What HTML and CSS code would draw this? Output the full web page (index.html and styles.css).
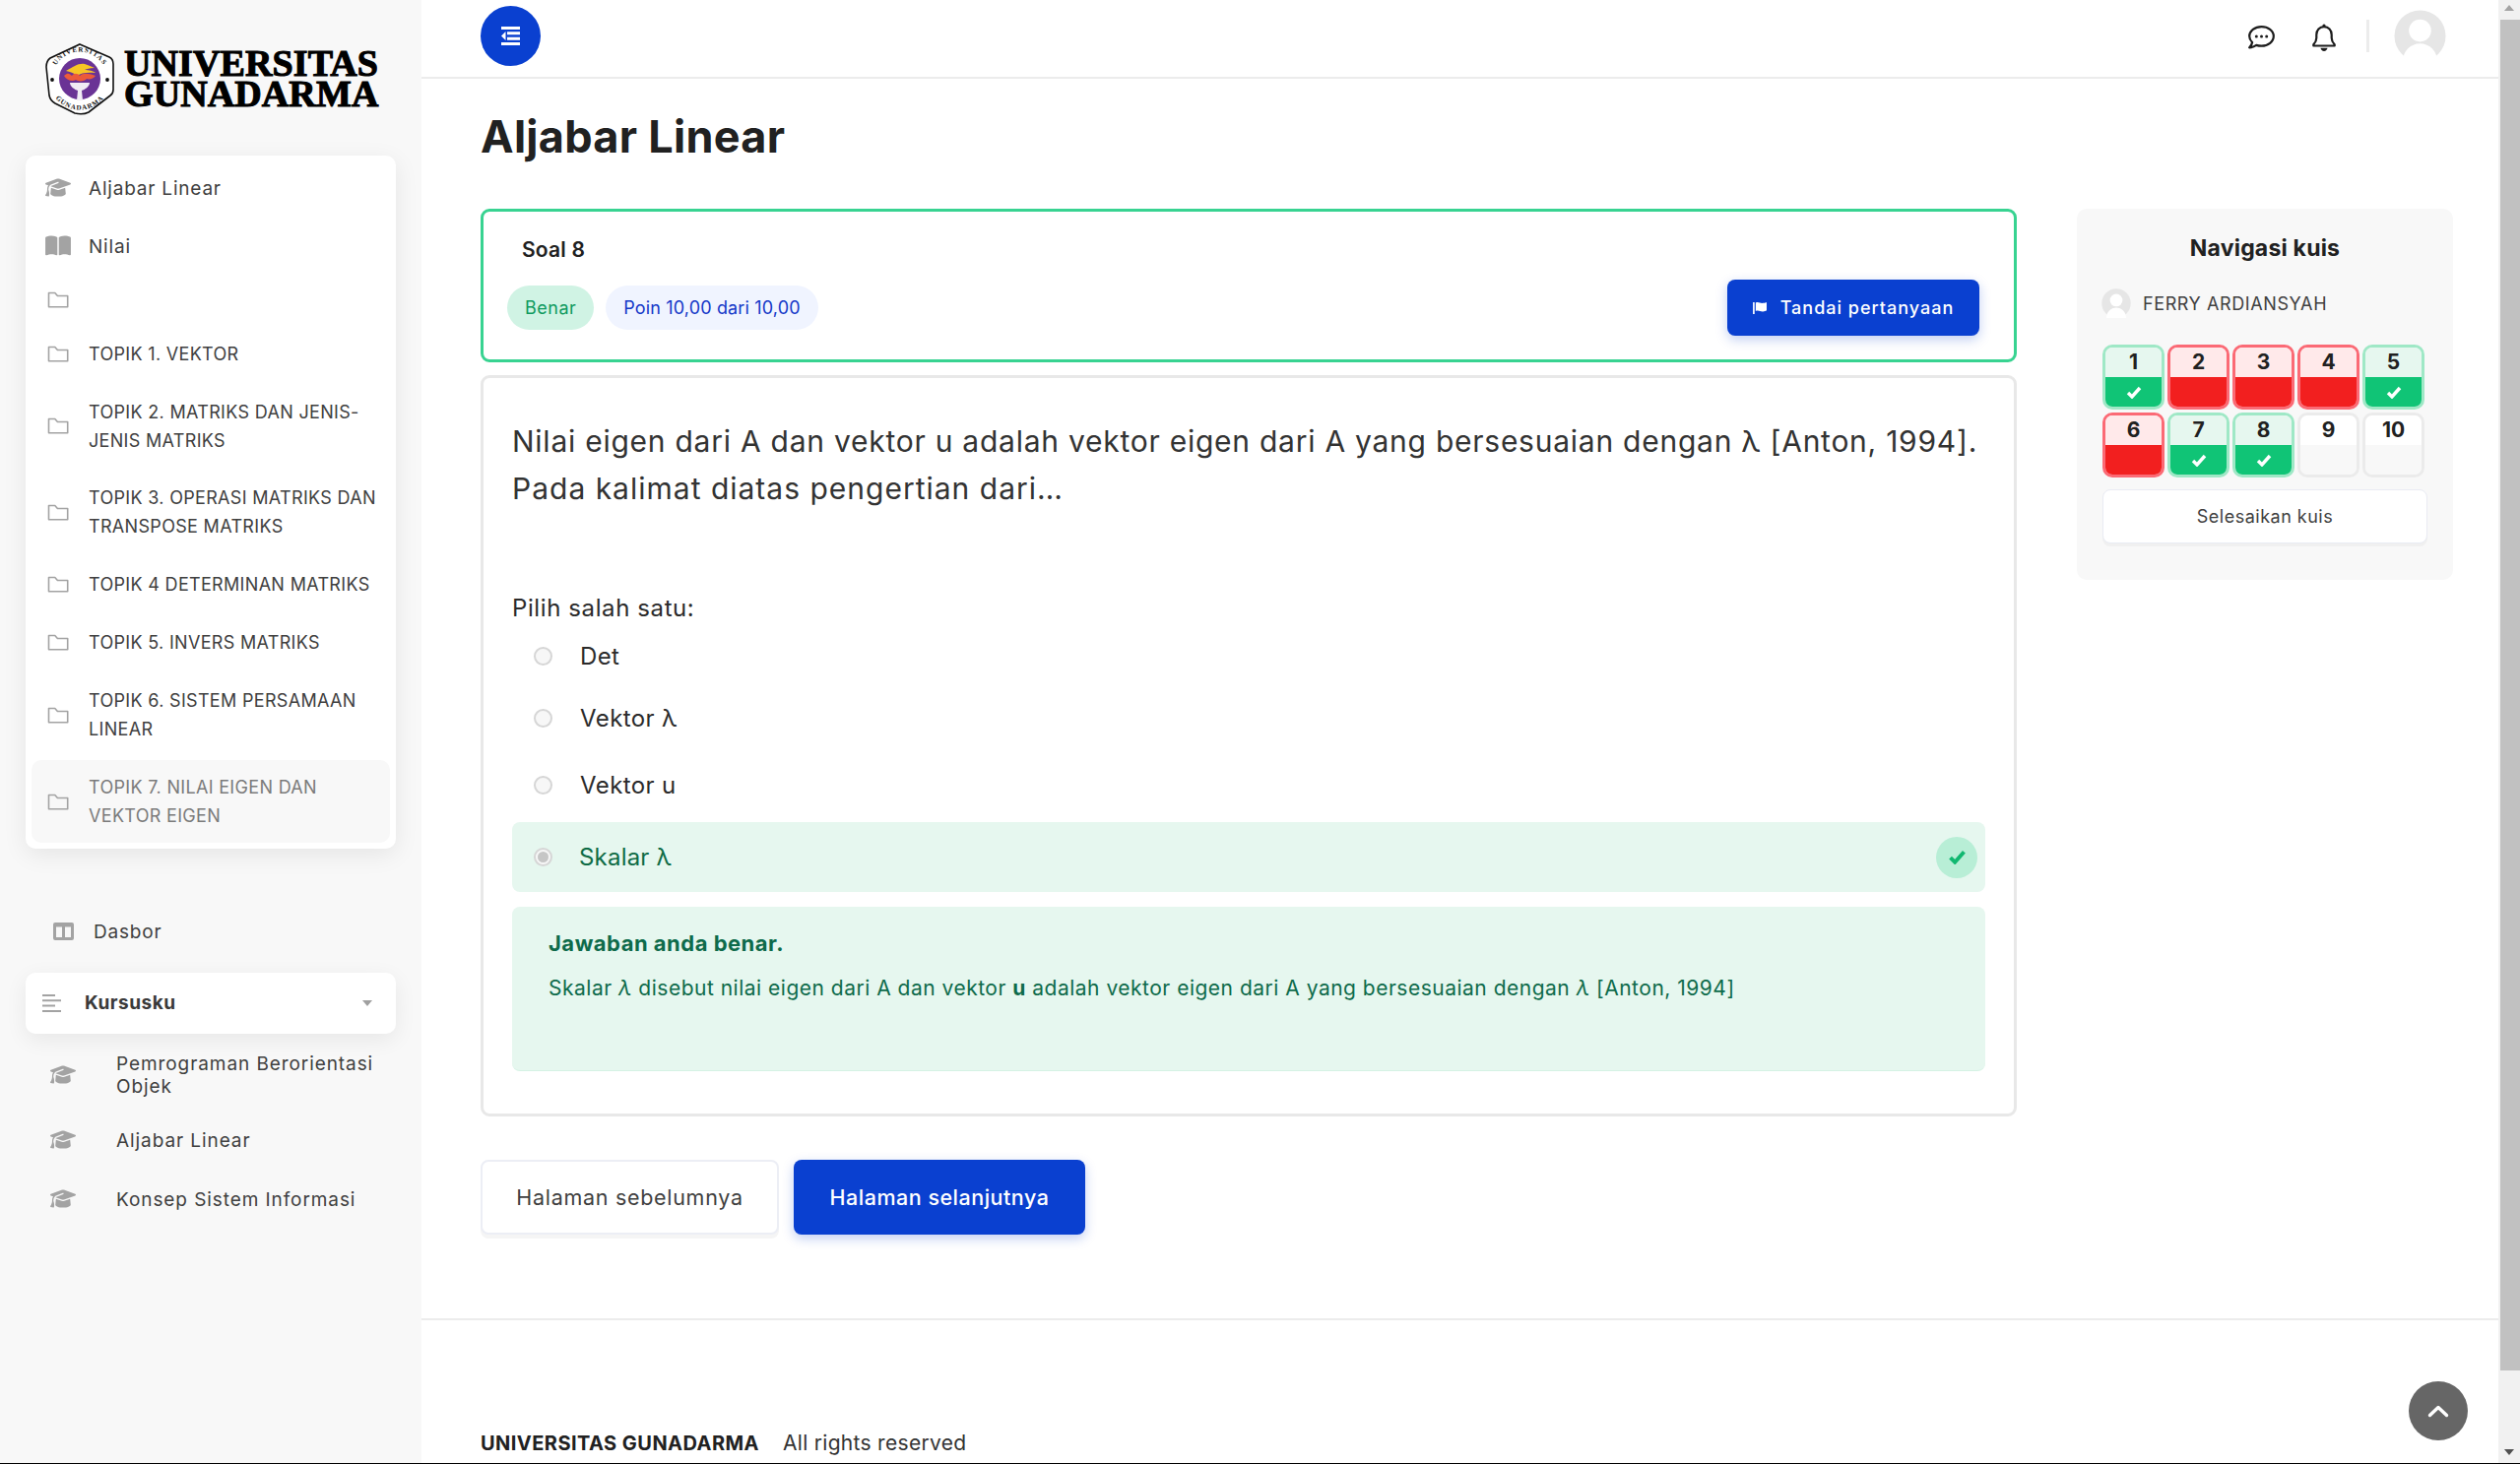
FILE: index.html
```html
<!DOCTYPE html>
<html lang="id">
<head>
<meta charset="utf-8">
<title>Aljabar Linear</title>
<link rel="stylesheet" href="styles.css">
</head>
<body>
<svg class="defs" width="0" height="0" aria-hidden="true">
  <symbol id="cap" viewBox="0 0 640 512"><path d="M320 32c-8.100 0-16.100 1.400-23.700 4.100L15.800 137.400C6.300 140.900 0 149.900 0 160s6.300 19.100 15.800 22.600l57.900 20.900C57.300 229.300 48 259.800 48 291.900v28.100c0 28.400-10.800 57.700-22.300 80.800c-6.500 13-13.900 25.800-22.500 37.600C0 442.700-.9 448.300 .9 453.400s6 8.900 11.200 10.200l64 16c4.200 1.100 8.700 .3 12.400-2s6.300-6.100 7.100-10.400c8.600-42.800 4.300-81.200-2.100-108.700C90.300 344.300 86 329.800 80 316.500V291.900c0-30.200 10.200-58.700 27.900-81.500c12.900-15.500 29.600-28 49.200-35.700l157-61.700c8.200-3.200 17.500 .8 20.700 9s-.8 17.500-9 20.700l-157 61.700c-12.400 4.900-23.300 12.400-32.200 21.600l159.600 57.600c7.600 2.700 15.600 4.100 23.700 4.100s16.100-1.400 23.700-4.100L624.200 182.600c9.500-3.400 15.800-12.500 15.800-22.600s-6.300-19.100-15.800-22.600L343.700 36.100C336.100 33.400 328.100 32 320 32zM128 408c0 35.300 86 72 192 72s192-36.700 192-72L496.700 262.600 354.500 314c-11.100 4-22.800 6-34.500 6s-23.500-2-34.500-6L143.300 262.600 128 408z"/></symbol>
  <symbol id="folder" viewBox="0 0 21 17"><path d="M1 15.800V1.500h6.300l2.600 3h10.300v11.300z" fill="none" stroke="currentColor" stroke-width="1.600" stroke-linejoin="round"/></symbol>
  <symbol id="tick" viewBox="0 0 16 13"><path d="M2 7l4 4 8-9" fill="none" stroke="currentColor" stroke-width="3.400"/></symbol>
  <symbol id="user" viewBox="0 0 54 54"><circle cx="27" cy="27" r="26.500" fill="#e6e6e6"/><circle cx="27" cy="21.500" r="11.500" fill="#fff"/><path d="M9 54c0-11 8-19 18-19s18 8 18 19z" fill="#fff"/></symbol>
</svg>

<div class="app">
  <aside class="sidebar">
    <div class="logo">
      <svg class="emblem" viewBox="0 0 70 73" aria-hidden="true">
        <path d="M35 1L65 14Q69 16 69 21L69 47Q69 51 66 53L44 70Q38 73 30 71L10 61Q5 58 4 53L1 24Q1 18 5 15z" fill="#fff" stroke="#111" stroke-width="1.600"/>
        <circle cx="35" cy="36" r="21" fill="#6a3395"/>
        <defs>
          <path id="arcTop" d="M7.500 36a27.500 27.500 0 0 1 55 0"/>
          <path id="arcBot" d="M3.500 36a31.500 31.500 0 0 0 63 0"/>
        </defs>
        <text class="arc"><textPath href="#arcTop" startOffset="50%" text-anchor="middle">UNIVERSITAS</textPath></text>
        <text class="arc"><textPath href="#arcBot" startOffset="50%" text-anchor="middle">GUNADARMA</textPath></text>
        <circle cx="7" cy="37" r="1.900" fill="#111"/><circle cx="63" cy="37" r="1.900" fill="#111"/>
        <path d="M21 28c8-4 12-8 19-7c4 1 7 3 10 4c-5 0-8 1-10 2c4 0 9 1 11 3c-8-1-15 0-19 3c-3-3-7-4-11-5z" fill="#f7c525"/>
        <path d="M19 33c4-4 6-2 8 0c2-3 6-3 8 0c3-3 8-3 16 0c-2 3-6 4-9 3c-2 3-9 3-11 1c-3 2-9 1-12-4z" fill="#ec5a3a"/>
        <path d="M25 40h20c0 4-5 7-8 8l1 10h-6l1-10c-3-1-8-4-8-8z" fill="#f1ecf4"/>
      </svg>
      <div class="logo-text"><span>UNIVERSITAS</span><span>GUNADARMA</span></div>
    </div>

    <nav class="card-menu">
      <a class="mi mi-mixed"><svg class="ic-cap"><use href="#cap"/></svg><span>Aljabar Linear</span></a>
      <a class="mi mi-mixed"><svg class="ic-book" viewBox="0 0 576 512"><path d="M249.600 471.500c10.800 3.800 22.400-4.100 22.400-15.500V78.600c0-4.200-1.600-8.400-5-11C247.400 52 202.400 32 144 32C93.500 32 46.300 45.300 18.100 56.100C6.800 60.500 0 71.700 0 83.800V454.100c0 11.900 12.800 20.200 24.100 16.500C55.600 460.100 105.500 448 144 448c33.900 0 79 14 105.600 23.500zm76.800 0C353 462 398.100 448 432 448c38.500 0 88.400 12.100 119.900 22.600c11.300 3.800 24.100-4.600 24.100-16.500V83.800c0-12.100-6.800-23.300-18.100-27.600C529.700 45.300 482.500 32 432 32c-58.400 0-103.400 20-123 35.600c-3.300 2.600-5 6.800-5 11V456c0 11.400 11.700 19.300 22.400 15.500z"/></svg><span>Nilai</span></a>
      <a class="mi mi-empty"><svg class="ic-folder"><use href="#folder"/></svg><span></span></a>
      <a class="mi"><svg class="ic-folder"><use href="#folder"/></svg><span>TOPIK 1. VEKTOR</span></a>
      <a class="mi"><svg class="ic-folder"><use href="#folder"/></svg><span>TOPIK 2. MATRIKS DAN JENIS-<br>JENIS MATRIKS</span></a>
      <a class="mi"><svg class="ic-folder"><use href="#folder"/></svg><span>TOPIK 3. OPERASI MATRIKS DAN<br>TRANSPOSE MATRIKS</span></a>
      <a class="mi"><svg class="ic-folder"><use href="#folder"/></svg><span>TOPIK 4 DETERMINAN MATRIKS</span></a>
      <a class="mi"><svg class="ic-folder"><use href="#folder"/></svg><span>TOPIK 5. INVERS MATRIKS</span></a>
      <a class="mi"><svg class="ic-folder"><use href="#folder"/></svg><span>TOPIK 6. SISTEM PERSAMAAN<br>LINEAR</span></a>
      <a class="mi mi-active"><svg class="ic-folder"><use href="#folder"/></svg><span>TOPIK 7. NILAI EIGEN DAN<br>VEKTOR EIGEN</span></a>
    </nav>

    <a class="dash">
      <svg class="ic-dash" viewBox="0 0 21 18"><path d="M0 2a2 2 0 0 1 2-2h17a2 2 0 0 1 2 2v14a2 2 0 0 1-2 2H2a2 2 0 0 1-2-2zM3 4.500V15h6V4.500zM12 4.500V15h6V4.500z" fill-rule="evenodd"/></svg>
      <span>Dasbor</span>
    </a>

    <div class="courses-head">
      <svg class="ic-lines" viewBox="0 0 19 18"><path d="M0 0h13v2H0zM0 5.300h19v2H0zM0 10.600h13v2H0zM0 16h19v2H0z"/></svg>
      <span class="courses-title">Kursusku</span>
      <i class="caret"></i>
    </div>

    <div class="courses">
      <a class="course"><svg class="ic-cap"><use href="#cap"/></svg><span>Pemrograman Berorientasi<br>Objek</span></a>
      <a class="course"><svg class="ic-cap"><use href="#cap"/></svg><span>Aljabar Linear</span></a>
      <a class="course course-last"><svg class="ic-cap"><use href="#cap"/></svg><span>Konsep Sistem Informasi</span></a>
    </div>
  </aside>

  <main class="main">
    <header class="topbar">
      <button class="menu-btn" aria-label="Menu">
        <svg viewBox="0 0 19 19" width="19" height="19"><path d="M0 0h19v3H0zM6 5.300h13v3H6zM6 10.700h13v3H6zM0 16h19v3H0zM4.500 5v9L0 9.500z" fill="#fff"/></svg>
      </button>
      <div class="top-actions">
        <svg class="ic-chat" viewBox="0 0 27 24"><path d="M13.500 1.200C6.800 1.200 1.200 5.300 1.200 10.800c0 2.400 1.100 4.500 2.900 6.200-.4 2-1.500 4-2.900 5.300 2.800-.2 5.200-1.100 7-2.400 1.600.5 3.400.8 5.300.8 6.700 0 12.300-4.300 12.300-9.900S20.200 1.200 13.500 1.200z" fill="none" stroke="#1c1c1c" stroke-width="2.200" stroke-linejoin="round"/><circle cx="8.300" cy="11" r="1.500" fill="#1c1c1c"/><circle cx="13.500" cy="11" r="1.500" fill="#1c1c1c"/><circle cx="18.700" cy="11" r="1.500" fill="#1c1c1c"/></svg>
        <svg class="ic-bell" viewBox="0 0 24 28"><path d="M12 3.200c-4.600 0-7.700 3.400-7.700 8v3.300c0 3-1.600 5.300-3 6.700v1.300h21.400v-1.300c-1.400-1.400-3-3.700-3-6.700v-3.300c0-4.600-3.100-8-7.700-8z" fill="none" stroke="#1c1c1c" stroke-width="2.200" stroke-linejoin="round"/><circle cx="12" cy="2" r="1.600" fill="#1c1c1c"/><path d="M8.500 24.800h7c-.4 2-1.700 3.200-3.500 3.200s-3.100-1.200-3.500-3.200z" fill="#1c1c1c"/></svg>
        <i class="sep"></i>
        <svg class="ic-avatar"><use href="#user"/></svg>
      </div>
    </header>

    <div class="page">
      <h1 class="title">Aljabar Linear</h1>
      <div class="columns">
        <section class="quiz">
          <div class="q-head">
            <div class="q-no">Soal 8</div>
            <div class="q-row">
              <span class="badge badge-ok">Benar</span>
              <span class="badge badge-pts">Poin 10,00 dari 10,00</span>
              <button class="flag-btn">
                <svg viewBox="0 0 16 14" width="15" height="13"><path d="M0 1h1.800v13H0zM3 1.500c3-1.500 5 1 8 .5 2-.3 3.500-.8 4-1v9c-1 .7-2.500 1-4 1.200-3 .3-5-2-8-.5z" fill="#fff"/></svg>
                <span>Tandai pertanyaan</span>
              </button>
            </div>
          </div>

          <div class="q-body">
            <p class="q-text">Nilai eigen dari A dan vektor u adalah vektor eigen dari A yang bersesuaian dengan λ [Anton, 1994].<br><span class="q-line">Pada kalimat diatas pengertian dari…</span></p>
            <div class="q-prompt">Pilih salah satu:</div>
            <label class="opt"><i class="radio"></i><span>Det</span></label>
            <label class="opt"><i class="radio"></i><span>Vektor λ</span></label>
            <label class="opt opt-tall"><i class="radio"></i><span>Vektor u</span></label>
            <label class="opt opt-right"><i class="radio radio-on"></i><span>Skalar λ</span>
              <i class="ok-dot"><svg width="19" height="15"><use href="#tick"/></svg></i>
            </label>
            <div class="feedback">
              <div class="fb-title">Jawaban anda benar.</div>
              <div class="fb-text">Skalar <em>λ</em> disebut nilai eigen dari A dan vektor <b>u</b> adalah vektor eigen dari A yang bersesuaian dengan <em>λ</em> [Anton, 1994]</div>
            </div>
          </div>

          <div class="pager">
            <a class="btn-prev">Halaman sebelumnya</a>
            <a class="btn-next">Halaman selanjutnya</a>
          </div>
        </section>

        <aside class="panel">
          <h2 class="panel-title">Navigasi kuis</h2>
          <div class="panel-user"><svg class="ic-mini"><use href="#user"/></svg><span>FERRY ARDIANSYAH</span></div>
          <div class="nav-grid">
            <a class="cell good"><b>1</b><i><svg width="16" height="13"><use href="#tick"/></svg></i></a>
            <a class="cell bad"><b>2</b><i></i></a>
            <a class="cell bad"><b>3</b><i></i></a>
            <a class="cell bad"><b>4</b><i></i></a>
            <a class="cell good"><b>5</b><i><svg width="16" height="13"><use href="#tick"/></svg></i></a>
            <a class="cell bad"><b>6</b><i></i></a>
            <a class="cell good"><b>7</b><i><svg width="16" height="13"><use href="#tick"/></svg></i></a>
            <a class="cell good"><b>8</b><i><svg width="16" height="13"><use href="#tick"/></svg></i></a>
            <a class="cell none"><b>9</b><i></i></a>
            <a class="cell none"><b>10</b><i></i></a>
          </div>
          <a class="finish">Selesaikan kuis</a>
        </aside>
      </div>
    </div>

    <footer class="footer"><b>UNIVERSITAS GUNADARMA</b><span>All rights reserved</span></footer>
    <button class="to-top" aria-label="Ke atas"><svg viewBox="0 0 22 14" width="22" height="14"><path d="M2.500 11.500L11 3.500l8.500 8" fill="none" stroke="#fff" stroke-width="3.400" stroke-linecap="round" stroke-linejoin="round"/></svg></button>
  </main>

  <div class="scrollbar">
    <i class="sb-up"></i>
    <i class="sb-thumb"></i>
    <i class="sb-down"></i>
  </div>
</div>
</body>
</html>
```

FILE: styles.css
```css
* { box-sizing: border-box; }
html, body { margin: 0; padding: 0; height: 100%; background: #fff; overflow: hidden; }
body { font-family: "Inter", "Noto Sans", sans-serif; color: #404040; }
.defs { position: absolute; }
a { color: inherit; text-decoration: none; }
i { font-style: normal; }
button { font: inherit; border: 0; padding: 0; cursor: pointer; }

.app { display: flex; height: 1487px; border-bottom: 1px solid #000; }

/* sidebar */
.sidebar { width: 428px; flex: none; background: #f8f8f8; }
.logo { display: flex; align-items: center; height: 158px; padding: 2px 0 0 46px; gap: 10px; }
.emblem { width: 70px; height: 73px; flex: none; }
.arc { font: 700 7px "Liberation Serif", serif; letter-spacing: 1px; fill: #111; }
.logo-text { display: flex; flex-direction: column; font: 700 38px/31px "Liberation Serif", serif; color: #000; letter-spacing: .1px; -webkit-text-stroke: 1.1px #000; }
.card-menu { margin: 0 26px; padding: 5px 6px 5.500px; background: #fff; border-radius: 10px; box-shadow: 0 6px 24px rgba(0,0,0,.08); display: flex; flex-direction: column; gap: 3.900px; }
.mi { display: flex; align-items: center; padding: 13px 0 13px 14px; font-size: 18px; line-height: 29px; color: #404040; letter-spacing: .32px; border-radius: 10px; }
.mi-mixed { font-size: 19px; letter-spacing: .8px; }
.mi > span { margin-left: 18px; }
.mi-mixed > span { position: relative; top: 1px; }
.mi-empty { min-height: 47px; padding: 0 0 0 14px; }
.mi-active { background: #f8f8f8; color: #7b7b7b; }
.mi svg, .course svg { fill: #a3a3a3; color: #a3a3a3; flex: none; }
.ic-cap { width: 26px; height: 21px; }
.ic-book { width: 26px; height: 23px; }
.ic-folder { width: 26px; height: 17px; }
.dash { display: flex; align-items: center; margin: 69.500px 0 0 54px; font-size: 19px; line-height: 29px; letter-spacing: .8px; }
.dash > span { position: relative; top: 1px; }
.ic-dash { width: 21px; height: 18px; fill: #a3a3a3; margin-right: 20px; }
.courses-head { display: flex; align-items: center; margin: 27.500px 26px 0; height: 62px; padding: 0 24px 0 17px; background: #fff; border-radius: 10px; box-shadow: 0 6px 22px rgba(0,0,0,.07); }
.ic-lines { width: 19px; height: 18px; fill: #a3a3a3; }
.courses-title { margin-left: 24px; font-size: 19px; font-weight: 700; letter-spacing: .5px; flex: 1; color: #3a3a3a; }
.caret { width: 0; height: 0; border: 5.500px solid transparent; border-top: 6px solid #a0a0a0; border-bottom: 0; }
.courses { padding: 18.500px 0 0 51px; display: flex; flex-direction: column; gap: 32px; }
.course { display: flex; align-items: center; font-size: 19px; line-height: 23px; letter-spacing: .92px; color: #404040; }
.course > span { margin-left: 41px; position: relative; top: 1px; }
.course-last { margin-top: 5px; }

/* main */
.main { flex: 1; min-width: 0; position: relative; overflow: hidden; }
.topbar { height: 80px; padding: 6px 53px 0 60px; border-bottom: 2px solid #ececec; display: flex; justify-content: space-between; align-items: flex-start; }
.menu-btn { width: 61px; height: 61px; border-radius: 50%; background: #0a40d0; display: flex; align-items: center; justify-content: center; }
.top-actions { display: flex; align-items: flex-start; }
.ic-chat { width: 27px; height: 24px; margin-top: 20px; }
.ic-bell { width: 24px; height: 28px; margin: 18px 0 0 38px; }
.sep { width: 3px; height: 33px; background: #ececec; margin: 14px 0 0 31px; }
.ic-avatar { width: 53px; height: 53px; margin: 4px 0 0 25px; }
.page { padding: 0 46px 0 60px; }
.title { margin: 29px 0 43px; font-size: 45px; line-height: 60px; font-weight: 700; color: #212121; letter-spacing: .28px; }
.columns { display: grid; grid-template-columns: 1560px 382px; column-gap: 61px; align-items: start; }

.q-head { border: 3px solid #38d391; border-radius: 9px; height: 156px; padding: 23px 35px 0 24px; }
.q-no { margin-left: 15px; font-size: 21px; line-height: 31px; font-weight: 600; color: #212121; letter-spacing: .2px; }
.q-row { display: flex; align-items: center; margin-top: 15px; height: 57px; }
.badge { height: 45px; border-radius: 23px; padding: 0 18px; display: flex; align-items: center; font-size: 18px; letter-spacing: .5px; }
.badge-ok { background: #d0f3e4; color: #0e9a5e; }
.badge-pts { margin-left: 12px; background: #f0f4ff; color: #1438c8; letter-spacing: .15px; }
.flag-btn { margin-left: auto; width: 256px; height: 57px; background: #0a40d0; color: #fff; border-radius: 8px; display: flex; align-items: center; justify-content: center; gap: 13px; font-size: 18px; font-weight: 500; letter-spacing: 1px; box-shadow: 0 4px 12px rgba(10,64,208,.25); }

.q-body { margin-top: 13px; border: 3px solid #e8e8e8; border-radius: 9px; height: 753px; padding: 40px 29px 0; }
.q-text { margin: 0; font-size: 30px; line-height: 48px; color: #333; letter-spacing: .75px; }
.q-line { letter-spacing: 1px; }
.q-prompt { margin-top: 80px; font-size: 24px; line-height: 35px; color: #2b2b2b; letter-spacing: .6px; }
.opt { display: flex; align-items: center; height: 63px; padding-left: 22px; font-size: 24px; color: #2b2b2b; letter-spacing: .4px; }
.opt-tall { height: 73px; }
.radio { width: 19px; height: 19px; border-radius: 50%; border: 2px solid #d6d6d6; background: #f7f7f7; margin-right: 28px; flex: none; display: flex; align-items: center; justify-content: center; }
.radio-on::after { content: ""; width: 11px; height: 11px; border-radius: 50%; background: #c6c6c6; }
.opt-right { height: 71px; margin-top: 1px; background: #e6f7ef; border-radius: 8px; color: #0e6b45; padding-right: 8px; letter-spacing: .2px; }
.opt-right .radio { margin-right: 27px; }
.ok-dot { margin-left: auto; width: 42px; height: 42px; border-radius: 50%; background: #b8eed6; color: #10b870; display: flex; align-items: center; justify-content: center; }
.feedback { margin-top: 15px; height: 167px; background: #e6f7ef; border-radius: 8px; padding: 22px 37px 0; color: #0e6b4b; border-bottom: 1px solid #d5f2e4; }
.fb-title { font-size: 22px; line-height: 30px; font-weight: 700; letter-spacing: .5px; }
.fb-text { margin-top: 16px; font-size: 21px; line-height: 30px; letter-spacing: .5px; }

.pager { display: flex; gap: 15px; margin-top: 44px; }
.btn-prev, .btn-next { height: 76px; display: flex; align-items: center; justify-content: center; font-size: 21.500px; border-radius: 8px; letter-spacing: .7px; }
.btn-prev { width: 303px; background: #fff; border: 2px solid #eceef5; box-shadow: 0 4px 0 #f5f5f5; color: #3f3f3f; }
.btn-next { width: 296px; background: #0a40d0; color: #fff; font-weight: 500; letter-spacing: .5px; box-shadow: 0 4px 12px rgba(10,64,208,.25); }

.panel { background: #f8f8f8; border-radius: 10px; height: 377px; padding: 23px 26px 0; }
.panel-title { margin: 0; text-align: center; font-size: 23px; line-height: 34px; font-weight: 700; color: #212121; letter-spacing: .2px; }
.panel-user { display: flex; align-items: center; margin: 24px 0 0 -1px; font-size: 18px; color: #404040; letter-spacing: .6px; }
.ic-mini { width: 30px; height: 30px; margin-right: 12px; }
.nav-grid { display: grid; grid-template-columns: repeat(5, 63px); grid-auto-rows: 66px; column-gap: 3px; row-gap: 3px; margin-top: 27px; }
.cell { border: 3px solid; border-radius: 10px; overflow: hidden; display: flex; flex-direction: column; font-size: 21px; color: #212121; }
.cell b { height: 30px; flex: none; text-align: center; line-height: 30px; font-weight: 700; }
.cell i { flex: 1; color: #fff; display: flex; align-items: center; justify-content: center; }
.good { border-color: #9fe8c6; }
.good b { background: #e6f7ef; }
.good i { background: #10c476; }
.bad { border-color: #fb6a75; }
.bad b { background: #ffe9ea; }
.bad i { background: #f21f1f; }
.none { border-color: #ebebeb; }
.none b { background: #fff; }
.none i { background: #f8f8f8; }
.finish { margin-top: 12px; width: 330px; height: 55px; display: flex; align-items: center; justify-content: center; background: #fff; border: 1px solid #e9ebf3; border-radius: 8px; box-shadow: 0 3px 0 #f0f0f0; font-size: 18px; letter-spacing: .5px; color: #404040; }

.footer { margin-top: 85px; border-top: 2px solid #ececec; padding: 113px 0 0 60px; font-size: 20px; line-height: 24px; color: #333; display: flex; gap: 24px; }
.footer b { font-weight: 700; color: #212121; letter-spacing: .45px; }
.footer span { font-size: 21px; letter-spacing: .3px; }
.to-top { position: absolute; left: 2018px; top: 1403px; width: 60px; height: 60px; border-radius: 50%; background: #666; display: flex; align-items: center; justify-content: center; }

/* scrollbar */
.scrollbar { width: 22px; flex: none; background: #f1f1f1; position: relative; }
.sb-thumb { position: absolute; left: 2px; right: 0; top: 20px; bottom: 94px; background: #c1c1c1; }
.sb-up, .sb-down { position: absolute; left: 6px; width: 0; height: 0; border: 5.500px solid transparent; }
.sb-up { top: 5px; border-top: 0; border-bottom: 6px solid #a3a3a3; }
.sb-down { bottom: 8px; border-bottom: 0; border-top: 6px solid #505050; }
```
